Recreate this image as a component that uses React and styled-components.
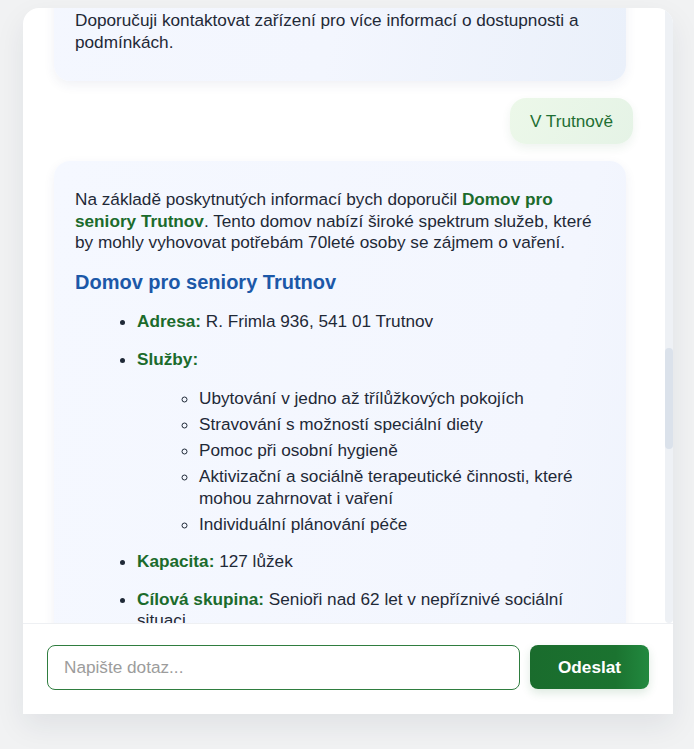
import React, { useLayoutEffect, useRef, useState, useCallback } from 'react';
import styled, { createGlobalStyle } from 'styled-components';

const GlobalStyle = createGlobalStyle`
  * { box-sizing: border-box; }
  html, body { margin: 0; padding: 0; background: #f1f2f3; }
  body { font-family: "Liberation Sans", Arial, sans-serif; }
`;

const Page = styled.div`
  height: 749px;
  padding: 8px 21px 0 23px;
  overflow: hidden;
`;

const Card = styled.div`
  height: 706px;
  background: #ffffff;
  border-radius: 16px 16px 0 0;
  box-shadow: 0 12px 30px rgba(30, 40, 60, 0.08);
  overflow: hidden;
  display: flex;
  flex-direction: column;
`;

const Viewport = styled.div`
  flex: 1;
  min-height: 0;
  display: flex;
`;

const Messages = styled.div`
  position: relative;
  flex: 1;
  min-width: 0;
  overflow-y: auto;
  padding: 24px 32px 24px 31px;
  display: flex;
  flex-direction: column;
  gap: 17px;
  scrollbar-width: none;
  &::-webkit-scrollbar { display: none; }
`;

const Track = styled.div`
  flex: none;
  width: 8px;
  background: #eef1f5;
  border-radius: 0 0 4px 4px;
`;

const Thumb = styled.div`
  width: 8px;
  border-radius: 4px;
  background: #dbe2eb;
`;

const AssistantBubble = styled.div`
  flex: none;
  margin-right: 7px;
  padding: 12px 21px;
  border-radius: 16px;
  background: linear-gradient(100deg, #f5f8ff 0%, #f3f6fe 65%, #eaf0fa 100%);
  box-shadow: 0 4px 12px rgba(40, 60, 110, 0.07);
  color: #1f2937;
  font-size: 17.2px;
  line-height: 21.6px;
`;

const UserBubble = styled.div`
  flex: none;
  align-self: flex-end;
  max-width: 80%;
  padding: 12px 20px;
  border-radius: 16px;
  background: linear-gradient(120deg, #ecf8e9 0%, #e5f3e6 100%);
  box-shadow: 0 4px 10px rgba(40, 100, 50, 0.08);
  color: #1f6f33;
  font-size: 17.2px;
  line-height: 22px;
`;

const Para = styled.p`
  margin: 16px 0;
`;

const Heading = styled.h3`
  margin: 16px 0 17px;
  font-size: 20px;
  line-height: 24px;
  font-weight: 700;
  color: #1c58a8;
`;

const List = styled.ul`
  margin: ${(p) => (p.$nested ? '18px 0 16px' : '16px 0')};
  padding-left: 62px;
  list-style: ${(p) => (p.$nested ? 'circle' : 'disc')};
`;

const Item = styled.li`
  margin: ${(p) => (p.$tight ? '4.4px 0' : '16px 0')};
`;

const Label = styled.strong`
  color: #1b6b2c;
  font-weight: 700;
`;

const Composer = styled.form`
  flex: none;
  display: flex;
  gap: 10px;
  padding: 21px 24px 24px;
  border-top: 1px solid #eef0f3;
  background: #ffffff;
`;

const Input = styled.input`
  flex: 1;
  min-width: 0;
  height: 45px;
  padding: 0 16px;
  border: 1px solid #2f7d3f;
  border-radius: 8px;
  font-family: "Liberation Sans", Arial, sans-serif;
  font-size: 17.2px;
  color: #1f2937;
  caret-color: #8fb4ec;
  outline: none;
  &::placeholder { color: #9c9c9c; }
`;

const SendButton = styled.button`
  flex: none;
  width: 119px;
  height: 44px;
  border: none;
  border-radius: 8px;
  background: linear-gradient(90deg, #1a6c2d 0%, #1b7330 72%, #22893f 100%);
  box-shadow: 0 4px 10px rgba(27, 110, 46, 0.15);
  color: #ffffff;
  font-family: "Liberation Sans", Arial, sans-serif;
  font-size: 17.2px;
  font-weight: 700;
  cursor: pointer;
`;

const earlierHomes = [
  {
    name: 'Domov pro seniory Dvůr Králové nad Labem',
    address: 'Roháčova 1475, 544 01 Dvůr Králové nad Labem',
    services: [
      'Celoroční pobyt v jednolůžkových a dvoulůžkových pokojích',
      'Strava pětkrát denně včetně diabetické diety',
      'Ergoterapie a společné pečení v klientské kuchyňce',
      'Kulturní a společenské akce',
    ],
    capacity: '98 lůžek',
    target: 'Senioři nad 65 let se sníženou soběstačností',
    contact: 'tel. 499 300 111',
  },
  {
    name: 'Domov pro seniory Vrchlabí',
    address: 'Krkonošská 140, 543 01 Vrchlabí',
    services: [
      'Pobytová služba s nepřetržitou péčí',
      'Vlastní kuchyně a možnost speciálních diet',
      'Terapeutická dílna a zahrada',
      'Rehabilitace a fyzioterapie',
    ],
    capacity: '85 lůžek',
    target: 'Senioři nad 60 let',
    contact: 'tel. 499 421 215',
  },
  {
    name: 'Domov Hořice',
    address: 'Husova 2191, 508 01 Hořice',
    services: [
      'Ubytování ve dvoulůžkových pokojích',
      'Nutriční poradenství a dietní strava',
      'Kroužek vaření a pečení jednou týdně',
      'Individuální plánování péče',
    ],
    capacity: '120 lůžek',
    target: 'Senioři nad 65 let se sníženou soběstačností',
    contact: 'tel. 493 622 411',
  },
  {
    name: 'Domov pro seniory Náchod',
    address: 'Vančurova 1755, 547 01 Náchod',
    services: [
      'Celoroční pobytová služba',
      'Strava s ohledem na individuální potřeby',
      'Aktivizační činnosti a společné vaření',
      'Ošetřovatelská a zdravotní péče',
    ],
    capacity: '140 lůžek',
    target: 'Senioři nad 60 let v nepříznivé sociální situaci',
    contact: 'tel. 491 405 111',
  },
];

function HomeSection({ home }) {
  return (
    <>
      <Heading>{home.name}</Heading>
      <List>
        <Item><Label>Adresa:</Label> {home.address}</Item>
        <Item>
          <Label>Služby:</Label>
          <List $nested>
            {home.services.map((s) => (
              <Item $tight key={s}>{s}</Item>
            ))}
          </List>
        </Item>
        <Item><Label>Kapacita:</Label> {home.capacity}</Item>
        <Item><Label>Cílová skupina:</Label> {home.target}</Item>
        <Item><Label>Kontakt:</Label> {home.contact}</Item>
      </List>
    </>
  );
}

export default function App() {
  const scrollRef = useRef(null);
  const anchorRef = useRef(null);
  const [thumb, setThumb] = useState({ top: 0, height: 0 });

  const measure = useCallback(() => {
    const box = scrollRef.current;
    if (!box) return;
    const { scrollTop, scrollHeight, clientHeight } = box;
    const height = Math.max(24, (clientHeight * clientHeight) / scrollHeight);
    const range = scrollHeight - clientHeight;
    const top = range > 0 ? (scrollTop / range) * (clientHeight - height) : 0;
    setThumb({ top, height });
  }, []);

  useLayoutEffect(() => {
    const box = scrollRef.current;
    const anchor = anchorRef.current;
    if (box && anchor) box.scrollTop = anchor.offsetTop - 90;
    measure();
  }, [measure]);

  return (
    <>
      <GlobalStyle />
      <Page>
        <Card>
          <Viewport>
            <Messages ref={scrollRef} onScroll={measure}>
              <AssistantBubble>
                <Para>
                  Dobrý den! Jsem virtuální asistent pro vyhledávání sociálních služeb v
                  Královéhradeckém kraji. Mohu vám pomoci najít vhodný domov pro seniory,
                  pečovatelskou službu nebo jinou formu podpory. S čím vám mohu pomoci?
                </Para>
              </AssistantBubble>
              <UserBubble>Potřebuji poradit s výběrem domova pro seniory.</UserBubble>
              <AssistantBubble>
                <Para>
                  Rád vám pomohu. Můžete mi prosím napsat, pro koho službu hledáte, kolik
                  je mu let a jaké má zájmy?
                </Para>
              </AssistantBubble>
              <UserBubble>
                Hledám domov pro seniory pro svou maminku. Je jí 70 let a ráda vaří.
              </UserBubble>
              <AssistantBubble>
                <Para>
                  Pro 70letou osobu se zájmem o vaření vám mohu doporučit několik zařízení
                  v Královéhradeckém kraji, která nabízejí aktivizační programy včetně
                  společného vaření a pečení. Všechna uvedená zařízení jsou registrovanými
                  poskytovateli sociálních služeb a přijímají klienty z celého kraje podle
                  aktuální kapacity.
                </Para>
                {earlierHomes.map((h) => (
                  <HomeSection key={h.name} home={h} />
                ))}
                <Para>
                  Doporučuji kontaktovat zařízení pro více informací o dostupnosti a
                  podmínkách.
                </Para>
              </AssistantBubble>
              <UserBubble ref={anchorRef}>V Trutnově</UserBubble>
              <AssistantBubble>
                <Para>
                  Na základě poskytnutých informací bych doporučil{' '}
                  <Label>Domov pro seniory Trutnov</Label>. Tento domov nabízí široké
                  spektrum služeb, které by mohly vyhovovat potřebám 70leté osoby se
                  zájmem o vaření.
                </Para>
                <Heading>Domov pro seniory Trutnov</Heading>
                <List>
                  <Item><Label>Adresa:</Label> R. Frimla 936, 541 01 Trutnov</Item>
                  <Item>
                    <Label>Služby:</Label>
                    <List $nested>
                      <Item $tight>Ubytování v jedno až třílůžkových pokojích</Item>
                      <Item $tight>Stravování s možností speciální diety</Item>
                      <Item $tight>Pomoc při osobní hygieně</Item>
                      <Item $tight>
                        Aktivizační a sociálně terapeutické činnosti, které mohou zahrnovat
                        i vaření
                      </Item>
                      <Item $tight>Individuální plánování péče</Item>
                    </List>
                  </Item>
                  <Item><Label>Kapacita:</Label> 127 lůžek</Item>
                  <Item>
                    <Label>Cílová skupina:</Label> Senioři nad 62 let v nepříznivé
                    sociální situaci
                  </Item>
                  <Item>
                    <Label>Kontakt:</Label>
                    <List $nested>
                      <Item $tight>Telefon: 499 829 111</Item>
                      <Item $tight>E-mail: info@dstrutnov.cz</Item>
                      <Item $tight>Web: www.dstrutnov.cz</Item>
                    </List>
                  </Item>
                  <Item>
                    <Label>Aktivity:</Label>
                    <List $nested>
                      <Item $tight>Společné vaření a pečení v cvičné kuchyňce</Item>
                      <Item $tight>Trénování paměti a reminiscenční terapie</Item>
                      <Item $tight>Výlety, kulturní a společenské akce</Item>
                      <Item $tight>Zahradní terapie a procházky</Item>
                    </List>
                  </Item>
                  <Item>
                    <Label>Cena pobytu:</Label>
                    <List $nested>
                      <Item $tight>Ubytování podle typu pokoje</Item>
                      <Item $tight>Strava podle zvolené diety</Item>
                      <Item $tight>Příspěvek na péči dle stupně závislosti</Item>
                    </List>
                  </Item>
                </List>
                <Para>
                  Domov pro seniory Trutnov je vhodnou volbou zejména díky široké nabídce
                  aktivizačních činností, do kterých se může zapojit i osoba se zájmem o
                  vaření.
                </Para>
                <Para>
                  Před podáním žádosti je vhodné připravit vyjádření praktického lékaře o
                  zdravotním stavu žadatele a informace o jeho příjmech, podle kterých se
                  stanoví úhrada za pobyt. Žádost lze podat osobně i poštou.
                </Para>
                <HomeSection
                  home={{
                    name: 'Alternativa: Domov Vrchlického',
                    address: 'Vrchlického 497, 541 01 Trutnov',
                    services: [
                      'Pobytová služba pro seniory',
                      'Celodenní stravování',
                      'Volnočasové a aktivizační programy',
                    ],
                    capacity: '64 lůžek',
                    target: 'Senioři nad 65 let',
                    contact: 'tel. 499 811 402',
                  }}
                />
                <Para>
                  Doporučuji se předem informovat o volné kapacitě a domluvit si osobní
                  návštěvu zařízení, kde si můžete prohlédnout pokoje i společné prostory.
                </Para>
              </AssistantBubble>
            </Messages>
            <Track>
              <Thumb style={{ marginTop: thumb.top, height: thumb.height }} />
            </Track>
          </Viewport>
          <Composer onSubmit={(e) => e.preventDefault()}>
            <Input placeholder="Napište dotaz..." autoFocus />
            <SendButton type="submit">Odeslat</SendButton>
          </Composer>
        </Card>
      </Page>
    </>
  );
}
